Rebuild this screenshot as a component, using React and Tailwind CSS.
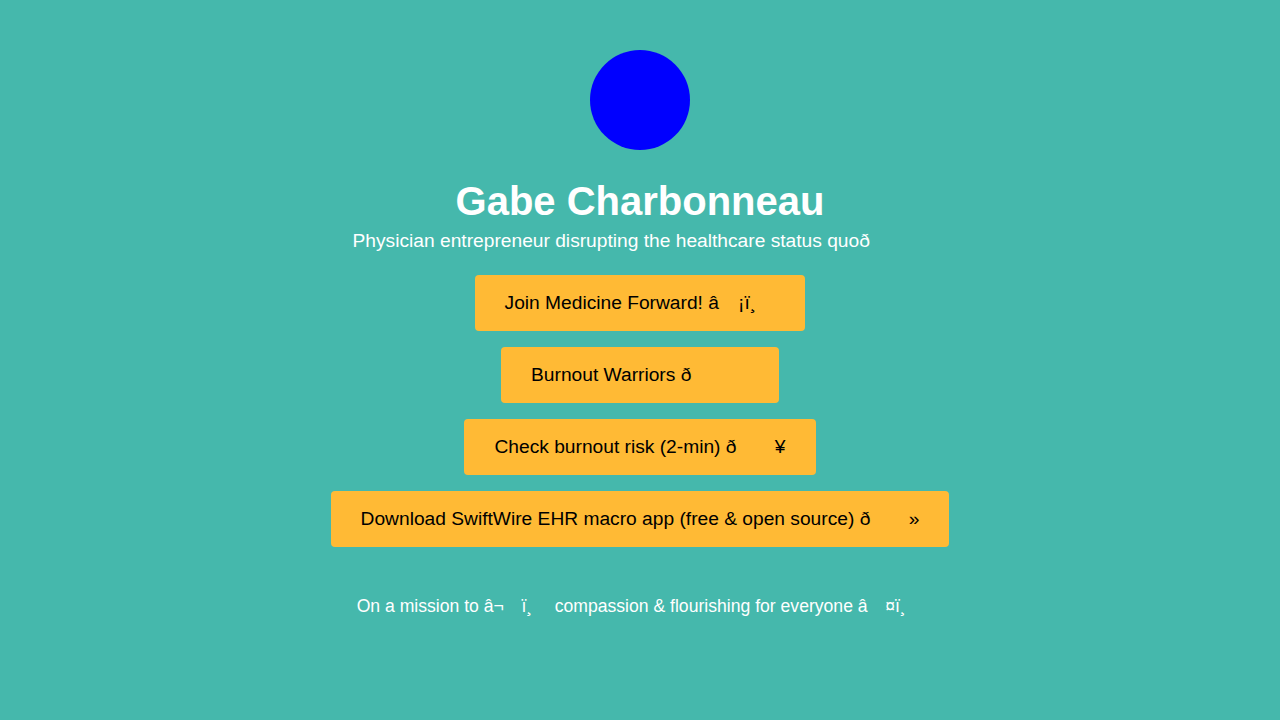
import React from 'react';

// Mojibake is kept as shown; the invisible control bytes are drawn as em spaces.
const links = [
  'Join Medicine Forward! â\u2003¡ï¸\u2003',
  'Burnout Warriors ð\u2003\u2003\u2003',
  'Check burnout risk (2-min) ð\u2003\u2003¥',
  'Download SwiftWire EHR macro app (free & open source) ð\u2003\u2003»',
];

export default function App() {
  return (
    <div className="w-full min-h-screen bg-[#45b8ac] flex flex-col items-center font-['Liberation_Sans',Arial,sans-serif] text-white">
      <div className="mt-[50px] w-[100px] h-[100px] rounded-full bg-[#0000ff]" />

      <h1 className="mt-[27px] text-[40px] leading-[48px] font-bold">Gabe Charbonneau</h1>
      <p className="mt-[5px] text-[19.2px] leading-[22px] whitespace-pre">
        {'Physician entrepreneur disrupting the healthcare status quoð\u2003\u2003\u2003'}
      </p>

      <div className="mt-[23px] flex flex-col items-center gap-4">
        {links.map((label) => (
          <a
            key={label}
            href="#"
            className="block bg-[#ffba35] text-black rounded-[4px] px-[30px] py-4 text-[19.2px] leading-6 whitespace-pre"
          >
            {label}
          </a>
        ))}
      </div>

      <p className="mt-[48px] text-[17.6px] leading-[22px] whitespace-pre">
        {'On a mission to â¬\u2003ï¸\u2003 compassion & flourishing for everyone â\u2003¤ï¸\u2003'}
      </p>
    </div>
  );
}
